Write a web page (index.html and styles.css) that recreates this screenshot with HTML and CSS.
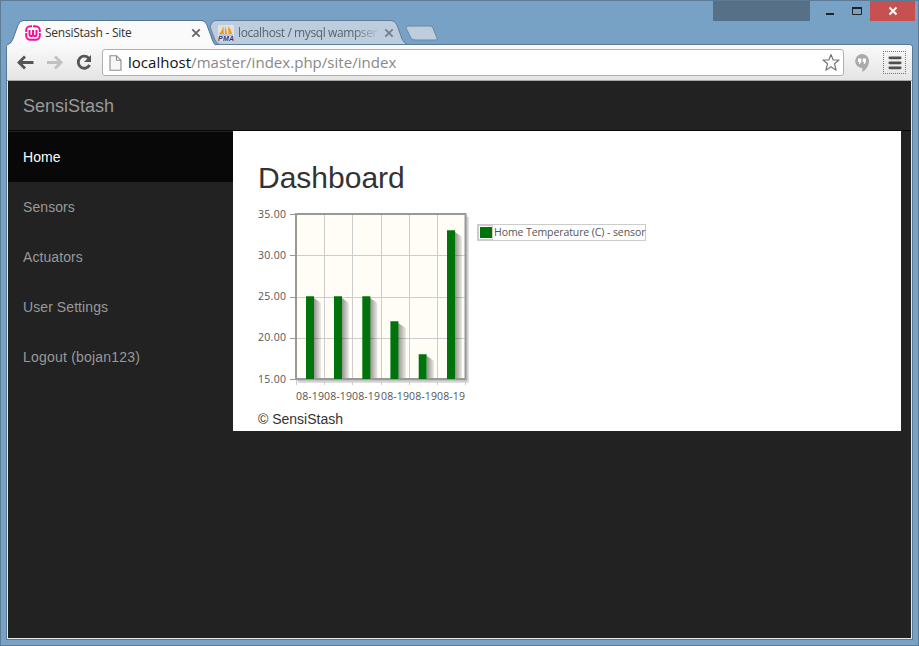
FILE: index.html
```html
<!DOCTYPE html>
<html lang="en">
<head>
<meta charset="utf-8">
<title>SensiStash - Site</title>
<link rel="stylesheet" href="styles.css">
</head>
<body>
<div class="window">
  <header class="titlebar">
    <div class="tab tab-active">
      <svg class="tab-shape" width="209" height="26" viewBox="0 0 209 26"><path d="M0 26V25Q4 24 6 19L11 5Q13 1 16 1H195Q198 1 200 5L205 19Q207 25 209 25V26Z" fill="#fafafa"/><path d="M0 25Q4 24 6 19L11 5Q13 .5 16 .5H195Q198 .5 200 5L205 19Q207 25 209 25" fill="none" stroke="#53748f"/></svg>
      <svg class="favicon" width="16" height="16" viewBox="0 0 16 16"><rect x="1.2" y="1.2" width="13.6" height="13.6" rx="4.2" fill="#fff" stroke="#f60f9b" stroke-width="2"/><path d="M4.500 5V9.500Q4.500 11 6 11H6.700Q8 11 8 9.500V5M8 9.500Q8 11 9.300 11H10Q11.500 11 11.500 9.500V5" fill="none" stroke="#f60f9b" stroke-width="2"/><path d="M0 7.500H2M14 7.500H16M7.500 0V2" stroke="#fff"/></svg>
      <span class="tab-title">SensiStash - Site</span>
      <svg class="tab-close" width="10" height="10" viewBox="0 0 10 10"><path d="M1.300 1.300L8.700 8.700M8.700 1.300L1.300 8.700" stroke="#666" stroke-width="1.8"/></svg>
    </div>
    <div class="tab tab-idle">
      <svg class="tab-shape" width="200" height="26" viewBox="0 0 200 26"><path d="M0 7Q2 .5 6 .5H181Q185 .5 187 5L192 19Q195 24.500 198 24.500H10Q7 24.500 5 20Z" fill="#bdcddd" stroke="#5f7f99"/></svg>
      <svg class="favicon" width="16" height="16" viewBox="0 0 16 16"><path d="M0 0H16V16H0Z" fill="#dce3e8"/><path d="M5.300 1L6 9H1Q4 6 5.300 1ZM7 1Q9 5 9 9H6.800ZM10 1Q13 4 14 9H10.500Z" fill="#f39a19"/><path d="M1 10H15" stroke="#aaa"/><text x="0" y="16" class="pma" textLength="16">PMA</text></svg>
      <span class="tab-title fade">localhost / mysql wampser</span>
      <svg class="tab-close" width="10" height="10" viewBox="0 0 10 10"><path d="M1.300 1.300L8.700 8.700M8.700 1.300L1.300 8.700" stroke="#73808c" stroke-width="1.8"/></svg>
    </div>
    <svg class="new-tab" width="34" height="17" viewBox="0 0 34 17"><path d="M3 1H25Q27 1 28 3L32 13Q33 15 31 15H10Q7 15 6 13L1 3Q1 1 3 1Z" fill="#bdcddd" stroke="#6888a3"/></svg>
    <div class="controls">
      <span class="user-block"></span>
      <svg class="minmax" width="60" height="20" viewBox="0 0 60 20"><path d="M16 13H24" stroke="#222" stroke-width="2"/><path d="M42.500 7V13.500H51.500V7" fill="none" stroke="#222"/><path d="M42 7H52" stroke="#222" stroke-width="2"/></svg>
      <span class="close"><svg width="10" height="10" viewBox="0 0 10 10"><path d="M1.500 1.500L8.500 8.500M8.500 1.500L1.500 8.500" stroke="#fff" stroke-width="2"/></svg></span>
    </div>
  </header>
  <div class="client">
    <div class="toolbar">
      <svg class="nav-icons" width="95" height="35" viewBox="0 0 95 35"><path d="M18 11.500L12 17.500L18 23.500M12.500 17.500H26.500" fill="none" stroke="#555" stroke-width="2.8"/><path d="M48 11.500L54 17.500L48 23.500M40 17.500H53" fill="none" stroke="#c1c1c1" stroke-width="2.8"/><path d="M82 13.500A6 6 0 1 0 82.600 20" fill="none" stroke="#555" stroke-width="2.8"/><path d="M84 10V17H77Z" fill="#555"/></svg>
      <div class="omnibox">
        <svg width="13" height="16" viewBox="0 0 13 16"><path d="M1 .7H7.500L12 5.200V15.200H1ZM7.500 1V5.200H12" fill="#f7f7f7" stroke="#8b8b8b" stroke-width="1.1"/></svg>
        <span class="url"><span class="host">localhost</span>/master/index.php/site/index</span>
        <svg class="star" width="20" height="19" viewBox="0 0 20 19"><path d="M10 1.500L12.200 7H18L13.500 10.800L15.100 17.200L10 13.700L4.900 17.200L6.500 10.800L2 7H7.800Z" fill="#fff" stroke="#777" stroke-width="1.2" stroke-linejoin="round"/></svg>
      </div>
      <svg class="hangouts" width="14" height="18" viewBox="0 0 14 18"><path d="M7 0A7 7 0 0 1 14 7Q14 14 7.300 18V14A7 7 0 1 1 7 0Z" fill="#aaa"/><path d="M3 4.500H6.300V8L4.800 10H3.800L4.500 8H3ZM7.700 4.500H11V8L9.500 10H8.500L9.200 8H7.700Z" fill="#fff"/></svg>
      <span class="menu"><svg width="14" height="14" viewBox="0 0 14 14"><path d="M1.800 1.800H12.200M1.800 6.800H12.200M1.800 11.800H12.200" stroke="#505050" stroke-width="2.800" stroke-linecap="round"/></svg></span>
    </div>
    <div class="page">
      <div class="navbar"><a class="brand">SensiStash</a></div>
      <div class="columns">
        <nav class="side">
          <a class="active">Home</a>
          <a>Sensors</a>
          <a>Actuators</a>
          <a>User Settings</a>
          <a class="logout">Logout (bojan123)</a>
        </nav>
        <main class="content">
          <h1>Dashboard</h1>
          <div class="chart-row">
            <svg class="chart" width="212" height="200" viewBox="258 206 212 200">
              <defs><linearGradient id="sh"><stop offset="0" stop-color="#000" stop-opacity=".42"/><stop offset="1" stop-color="#000" stop-opacity=".07"/></linearGradient></defs>
              <path d="M466 217H469V383H298V380H466Z" fill="#000" opacity=".12"/>
              <path d="M466 215H467.500V381.500H297V380H466Z" fill="#000" opacity=".12"/>
              <rect x="296" y="214" width="169" height="165" fill="#fffdf6"/>
              <path d="M324.500 214V385M352.500 214V385M381.500 214V385M409.500 214V385M437.500 214V385M296 255.500H465M296 297.500H465M296 338.500H465M296.500 380V385M465.500 380V385" stroke="#ccc"/>
              <path d="M290 214.500H296M290 255.500H296M290 297.500H296M290 338.500H296M290 379.500H296" stroke="#999"/>
              <g fill="url(#sh)">
                <path d="M314 298L321 303V379H314Z"/><path d="M342 298L349 303V379H342Z"/><path d="M370 298L377.500 303V379H370Z"/>
                <path d="M398 323L406 328V379H398Z"/><path d="M427 356L434 361V379H427Z"/><path d="M455 232L462 237V379H455Z"/>
              </g>
              <rect x="296" y="214" width="169.500" height="165" fill="none" stroke="#999" stroke-width="2"/>
              <path d="M306 296.300H314V379H306ZM334 296.300H342V379H334ZM362.300 296.300H370.300V379H362.300ZM390.400 321.300H398.400V379H390.400ZM418.700 354.200H426.700V379H418.700ZM447 230.300H455V379H447Z" fill="#00740b"/>
              <g class="ticks">
                <text x="258" y="218" textLength="28">35.00</text><text x="258" y="259" textLength="28">30.00</text><text x="258" y="300" textLength="28">25.00</text><text x="258" y="341" textLength="28">20.00</text><text x="258" y="383" textLength="28">15.00</text>
                <text x="296" y="400" textLength="28">08-19</text><text x="324" y="400" textLength="28">08-19</text><text x="352" y="400" textLength="28">08-19</text><text x="381" y="400" textLength="28">08-19</text><text x="409" y="400" textLength="28">08-19</text><text x="437" y="400" textLength="28">08-19</text>
              </g>
            </svg>
            <div class="legend"><span class="swatch"><i></i></span><span class="legend-text">Home Temperature (C) - sensor</span></div>
          </div>
          <footer>© SensiStash</footer>
        </main>
      </div>
    </div>
  </div>
</div>
</body>
</html>
```
FILE: styles.css
```css
* { box-sizing: border-box; }
body { margin: 0; overflow: hidden; font-family: "Liberation Sans", Arial, sans-serif; font-size: 14px; color: #333; }
svg { display: block; flex: none; }
.window { width: 919px; height: 646px; border: 1px solid #5b7b97; background: #78a2c5; padding: 0 6px 6px 5px; display: flex; flex-direction: column; }

.titlebar { height: 44px; flex: none; display: flex; position: relative; }
.tab { height: 25px; margin-top: 19px; position: relative; display: flex; align-items: center; font: 12px "Open Sans", "Noto Sans", sans-serif; color: #333; white-space: nowrap; }
.tab > * { position: relative; }
.tab > .tab-shape { position: absolute; left: 0; top: 0; }
.tab-active { width: 203px; padding-left: 18px; z-index: 2; margin-left: 1px; }
.tab-active .tab-title { width: 90px; letter-spacing: -.25px; margin-left: 4px; }
.tab-active .tab-close { margin-left: 56px; }
.tab-idle { width: 196px; padding-left: 8px; color: #59636c; z-index: 1; }
.tab-idle .tab-title { width: 141px; margin-left: 4px; letter-spacing: -.4px; }
.fade { -webkit-mask-image: linear-gradient(90deg, #000 115px, transparent 143px); }
.tab-idle .tab-close { margin-left: 5px; }
.new-tab { margin: 24px 0 0 -1px; }
.pma { font: italic bold 7px "Liberation Sans", sans-serif; fill: #333377; }
.controls { margin-left: auto; display: flex; height: 20px; margin-right: -3px; }
.user-block { width: 97px; background: #557087; }
.close { width: 45px; background: #c75050; display: flex; align-items: center; justify-content: center; }

.client { flex: 1; min-height: 0; margin-left: 1px; border: 1px solid #e6eaee; border-top: 0; display: flex; flex-direction: column; border-radius: 3px 3px 0 0; box-shadow: 0 0 0 1px #587a96; }
.toolbar { height: 36px; flex: none; display: flex; align-items: center; background: linear-gradient(#fafafa, #e4e4e4); border-bottom: 1px solid #a9a9a9; margin: 0 -1px; border-radius: 3px 3px 0 0; }
.omnibox { width: 742px; height: 27px; border: 1px solid #b0b0b0; border-radius: 3px; background: #fff; display: flex; align-items: center; padding: 0 2px 0 6px; }
.url { font: 15px "Open Sans", "Noto Sans", sans-serif; letter-spacing: .03px; color: #888; margin: 0 0 2px 6px; white-space: nowrap; }
.host { color: #111; }
.star { margin-left: auto; }
.hangouts { margin-left: 11px; }
.menu { width: 23px; height: 23px; margin-left: 14px; border: 1px dotted #777; display: flex; align-items: center; justify-content: center; }

.page { flex: 1; min-height: 0; background: #222; }
.navbar { height: 50px; border-bottom: 1px solid #080808; padding: 0 15px; line-height: 50px; }
.brand { font-size: 18px; color: #999; }
.columns { display: grid; grid-template-columns: 225px 668px; }
.side { padding-top: 1px; }
.side a { display: block; height: 50px; padding: 15px; line-height: 20px; color: #999; letter-spacing: .08px; }
.side a.active { background: #080808; color: #fff; }
.side a.logout { letter-spacing: .21px; }
.content { height: 300px; background: #fff; padding: 30px 25px 0; }
h1 { margin: 0; font-size: 30px; font-weight: 500; line-height: 33px; height: 45px; }
.chart-row { display: flex; align-items: flex-start; height: 203px; }
.ticks { font: 10.5px "Open Sans", "Noto Sans", sans-serif; fill: #555; }
.legend { margin: 18px 0 0 7px; width: 169px; height: 17px; border: 1px solid #ccc; display: flex; align-items: center; }
.swatch { width: 15px; height: 15px; border: 1px solid #ccc; padding: 1px; margin-right: 1px; flex: none; }
.swatch i { display: block; width: 12px; height: 11px; background: #00740b; }
.legend-text { font: 10.5px/14px "Open Sans", "Noto Sans", sans-serif; color: #555; white-space: nowrap; letter-spacing: -.09px; margin-top: -2px; }
footer { line-height: 20px; }
```
